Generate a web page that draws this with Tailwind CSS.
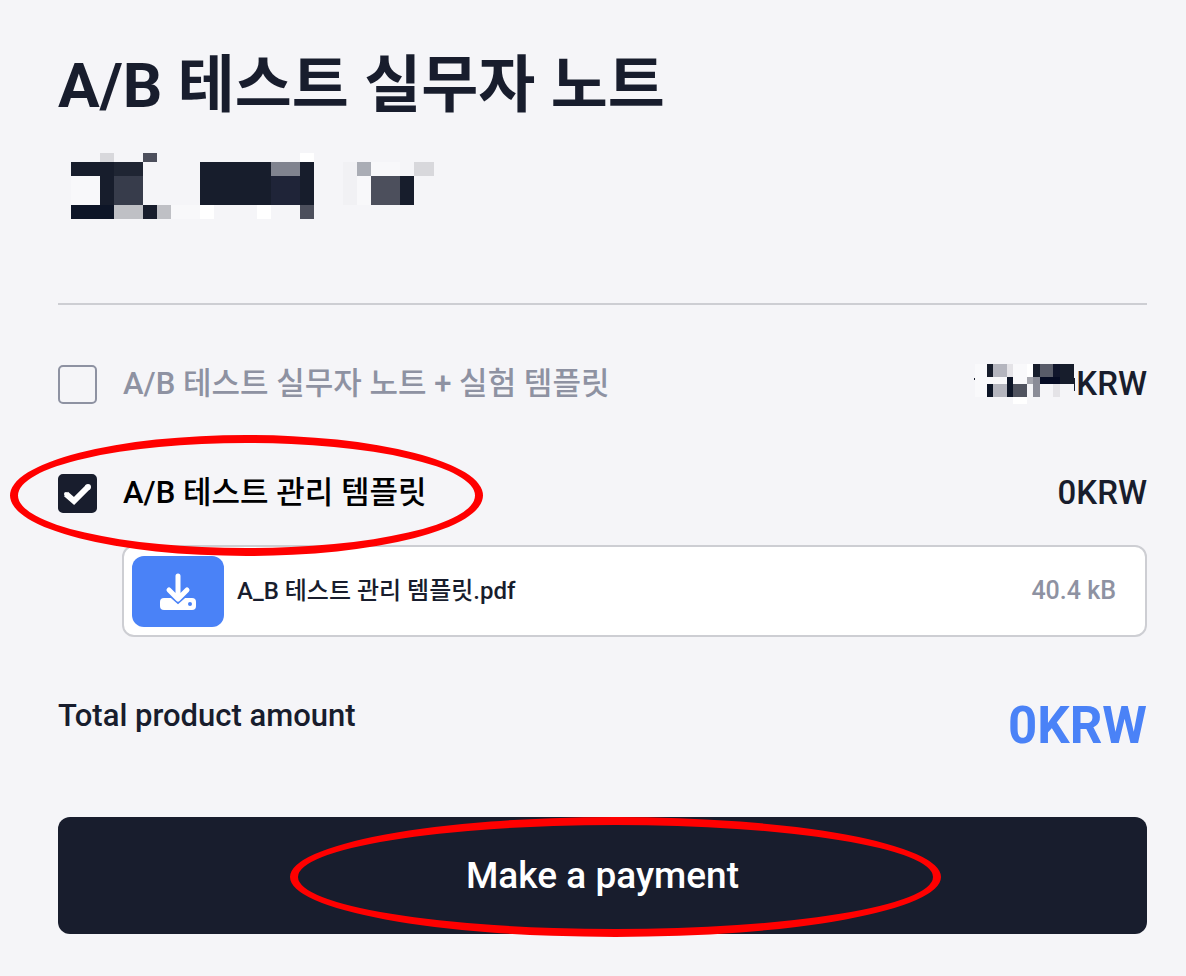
<!DOCTYPE html>
<html lang="ko">
  <head>
    <meta charset="UTF-8" />
    <meta name="viewport" content="width=device-width, initial-scale=1.0" />
    <title>A/B 테스트 실무자 노트</title>
    <script src="https://cdn.jsdelivr.net/npm/@tailwindcss/browser@4"></script>
  </head>
  <body
    class="min-h-screen bg-[#f5f5f8] font-['Roboto','Noto_Sans_CJK_KR','Noto_Sans_CJK_SC',sans-serif] text-[#181d2d]"
  >
    <main class="pl-[58px] pr-[39px] pt-10 pb-10">
      <h1 class="text-[62px] leading-[92px] font-bold">A/B 테스트 실무자 노트</h1>

      <!-- hidden product price -->
      <svg class="mt-5 w-[376px] h-20 block" viewBox="58 152 376 80" shape-rendering="crispEdges" role="img" aria-label="Hidden price">
        <path fill="#f8f8fa" d="M71 176h29v29H71zM171 205h29v14h-29zM371 162h29v14h-29zM357 176h14v29h-14z" />
        <path fill="#fff" d="M300 153h14v9h-14zM200 205h14v14h-14zM257 205h14v14h-14z" />
        <path fill="#d8d8dc" d="M100 153h14v9h-14zM414 162h20v14h-20z" />
        <path fill="#f1f1f4" d="M343 162h14v43h-14z" />
        <path fill="#4c4f5c" d="M143 153h14v9h-14zM300 205h14v14h-14zM371 176h29v29h-29z" />
        <path fill="#171d2c" d="M71 162h43v14H71zM100 176h14v29h-14zM200 162h71v43h-71zM300 162h14v43h-14zM400 176h14v29h-14zM143 205h14v14h-14z" />
        <path fill="#1f2533" d="M114 162h29v14h-29z" />
        <path fill="#373c4b" d="M114 176h29v29h-29z" />
        <path fill="#0d1527" d="M71 205h43v14H71z" />
        <path fill="#bfc0c5" d="M114 205h29v14h-29zM157 205h14v14h-14z" />
        <path fill="#80838f" d="M271 162h29v14h-29z" />
        <path fill="#1f2438" d="M271 176h29v29h-29z" />
        <path fill="#aaadb5" d="M357 162h14v14h-14z" />
      </svg>

      <hr class="mt-[71px] border-0 h-[2px] bg-[#cdced3]" />

      <div class="mt-[55px] flex items-center h-12">
        <input
          id="note"
          type="checkbox"
          class="appearance-none w-[39px] h-[39px] rounded-[5px] border-2 border-[#8e92a2] checked:bg-[#181d2d]"
        />
        <label for="note" class="ml-[26px] text-[31px] leading-[48px] font-medium text-[#8e92a2]">
          A/B 테스트 실무자 노트 + 실험 템플릿
        </label>
        <div class="ml-auto flex items-center text-[33px] leading-[48px] font-medium">
          <svg class="w-[102px] h-10" viewBox="974 363 102 40" shape-rendering="crispEdges" role="img" aria-label="Hidden price">
            <path fill="#f9f9fb" d="M975 363h52v33h-52z" />
            <path fill="#fff" d="M1027 363h6v13h-6zM1013 396h14v7h-14z" />
            <path fill="#171d2c" d="M987 363h6v13h-6zM1033 363h7v13h-7zM1060 363h14v20h-14zM1074 377h1v13h-1zM974 377h1v2h-1z" />
            <path fill="#b4b5be" d="M993 363h14v13h-14zM993 383h14v13h-14z" />
            <path fill="#e4e3e7" d="M1007 363h6v13h-6zM1053 383h7v13h-7z" />
            <path fill="#585b69" d="M1040 363h13v13h-13z" />
            <path fill="#10152c" d="M1053 363h7v13h-7z" />
            <path fill="#0d1527" d="M987 383h6v13h-6zM1007 376h6v20h-6z" />
            <path fill="#a5a6ae" d="M1027 376h6v7h-6z" />
            <path fill="#8a8c97" d="M1033 376h7v20h-7z" />
            <path fill="#050b24" d="M1040 376h20v7h-20z" />
            <path fill="#50535f" d="M1013 383h14v13h-14z" />
          </svg>
          <span>KRW</span>
        </div>
      </div>

      <div class="relative mt-[61px] flex items-center h-12">
        <input
          id="template"
          type="checkbox"
          checked
          class="peer appearance-none w-[39px] h-[39px] rounded-[5px] border-2 border-[#8e92a2] checked:border-[#181d2d] checked:bg-[#181d2d]"
        />
        <svg class="hidden peer-checked:block absolute left-0 w-[39px] h-[39px] pointer-events-none" viewBox="0 0 39 39" fill="none">
          <path d="M8 20L16 27L30 13" stroke="#fff" stroke-width="6" />
          <circle cx="8" cy="20" r="2" fill="#fff" />
          <circle cx="30" cy="13" r="3" fill="#fff" />
        </svg>
        <label for="template" class="ml-[26px] text-[31px] leading-[48px] font-medium text-black">
          A/B 테스트 관리 템플릿
        </label>
        <span class="ml-auto text-[33px] leading-[48px] font-medium">0KRW</span>
        <!-- highlight ring -->
        <div class="absolute z-10 -left-12 -top-[34px] w-[473px] h-[121px] rounded-[50%] border-8 border-[#ff0000] pointer-events-none"></div>
      </div>

      <div class="mt-7 ml-16 flex items-center h-[92px] pl-2 pr-[29px] bg-white border-2 border-[#cdced3] rounded-xl">
        <button type="button" aria-label="Download" class="w-[92px] h-[71px] rounded-xl bg-[#4a82f7] flex items-center justify-center">
          <svg class="w-[38px] h-[38px]" viewBox="0 0 38 38" fill="none">
            <rect x="1" y="26" width="36" height="12" rx="4" fill="#fff" />
            <path d="M10 19L19 27L28 19" stroke="#4a82f7" stroke-width="8" />
            <path d="M19 4V26M10 18L19 27L28 18" stroke="#fff" stroke-width="5" stroke-linecap="round" stroke-linejoin="round" />
            <circle cx="31" cy="32" r="2" fill="#4a82f7" />
          </svg>
        </button>
        <span class="ml-[13px] text-2xl leading-9 font-medium">A_B 테스트 관리 템플릿.pdf</span>
        <span class="ml-auto text-[25px] leading-9 font-medium text-[#8e92a2]">40.4 kB</span>
      </div>

      <div class="mt-[55px] flex justify-between">
        <span class="text-[31px] leading-[48px] font-medium">Total product amount</span>
        <strong class="text-[51px] leading-[68px] font-bold text-[#4a82f7]">0KRW</strong>
      </div>

      <div class="relative mt-[57px]">
        <button type="button" class="w-full h-[117px] rounded-xl bg-[#181d2d] text-white text-[37px] leading-[54px] font-medium">
          Make a payment
        </button>
        <!-- highlight ring -->
        <div class="absolute left-[232px] top-0 w-[651px] h-[120px] rounded-[50%] border-8 border-[#ff0000] pointer-events-none"></div>
      </div>
    </main>
  </body>
</html>
